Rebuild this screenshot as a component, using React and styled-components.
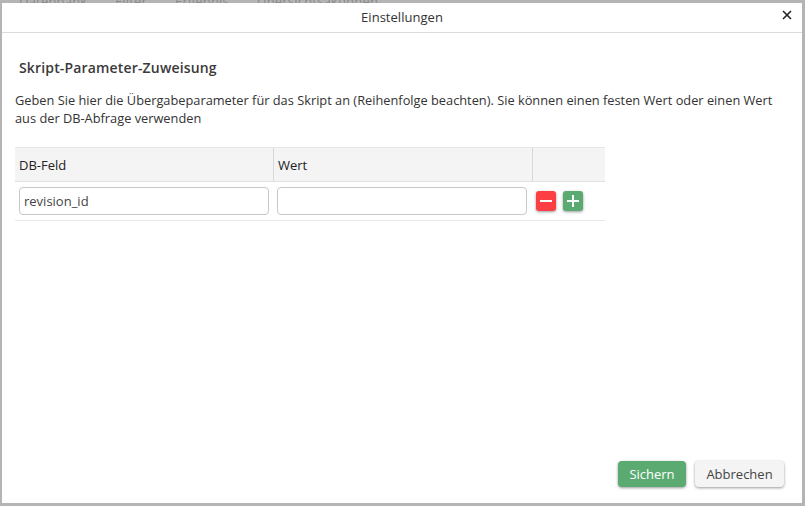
import React from "react";
import styled, { createGlobalStyle } from "styled-components";

const GlobalStyle = createGlobalStyle`
    html, body {
        margin: 0;
        padding: 0;
    }
    body {
        font-family: "Open Sans", "Liberation Sans", sans-serif;
        font-size: 13px;
        color: #333;
    }
`;

const Backdrop = styled.div`
    position: relative;
    width: 805px;
    height: 506px;
    box-sizing: border-box;
    padding: 3px 3px 3px 2px;
    background-color: #b4b4b4;
    overflow: hidden;
`;

const BehindTabs = styled.div`
    position: absolute;
    top: -7px;
    left: 19px;
    display: flex;
    gap: 28px;
    color: #8a8a8a;
    font-size: 13px;
    letter-spacing: 0.2px;
    line-height: 16px;
`;

const Dialog = styled.div`
    position: relative;
    display: flex;
    flex-direction: column;
    height: 100%;
    background-color: #fff;
`;

const Header = styled.div`
    display: flex;
    align-items: center;
    justify-content: center;
    height: 29px;
    border-bottom: 1px solid #dcdcdc;
    font-size: 13px;
    letter-spacing: 0.03px;
    padding-bottom: 1px;
    box-sizing: content-box;
    margin-top: -1px;
    position: relative;
`;

const CloseButton = styled.button`
    position: absolute;
    right: 9px;
    top: 7px;
    width: 12px;
    height: 12px;
    padding: 0;
    border: none;
    background: none;
    display: flex;
`;

const Body = styled.div`
    flex: 1;
    padding: 0 13px;
`;

const Heading = styled.h3`
    margin: 25px 0 0 4px;
    font-size: 14px;
    line-height: 19px;
    font-weight: 600;
    letter-spacing: 0.16px;
    color: #3a3a3a;
`;

const Intro = styled.p`
    margin: 14px 0 0;
    font-size: 12.8px;
    line-height: 18px;
    width: 770px;
`;

const Table = styled.div`
    width: 590px;
    margin-top: 20px;
`;

const Row = styled.div`
    display: grid;
    grid-template-columns: 258px 259px 73px;
    border-bottom: 1px solid #e8e8e8;
`;

const HeadRow = styled(Row)`
    grid-template-columns: 259px 259px 72px;
    background-color: #f4f4f4;
    border-top: 1px solid #e6e6e6;
    border-bottom: 1px solid #e2e2e2;
`;

const HeadCell = styled.div`
    height: 33px;
    box-sizing: border-box;
    padding: 0 4px;
    display: flex;
    align-items: center;
    font-weight: 500;
    color: #222;
    border-right: 1px solid ${(p) => (p.$last ? "transparent" : "#d8d8d8")};
`;

const Cell = styled.div`
    height: 38px;
    box-sizing: border-box;
    padding: 5px 4px 0;
`;

const ActionCell = styled(Cell)`
    display: flex;
    gap: 7px;
    padding: 9px 0 0 4px;
`;

const Input = styled.input`
    display: block;
    width: 250px;
    height: 28px;
    box-sizing: border-box;
    padding: 0 4px;
    border: 1px solid #c8c8c8;
    border-radius: 4px;
    font-family: inherit;
    font-size: 13px;
    color: #444;
    outline: none;
`;

const IconButton = styled.button`
    width: 20px;
    height: 20px;
    padding: 0;
    border: none;
    border-radius: 3px;
    background-color: ${(p) => p.$color};
    box-shadow: 0 1px 3px rgba(0, 0, 0, 0.4);
    display: flex;
    align-items: center;
    justify-content: center;
`;

const Footer = styled.div`
    display: flex;
    justify-content: flex-end;
    gap: 9px;
    padding: 0 18px 16px 0;
`;

const Button = styled.button`
    height: 26px;
    width: ${(p) => p.$width}px;
    padding: 0;
    border: none;
    border-radius: 4px;
    font-family: inherit;
    font-size: 13px;
    color: ${(p) => (p.$primary ? "#fff" : "#444")};
    background-color: ${(p) => (p.$primary ? "#5aaa72" : "#f4f4f4")};
    box-shadow: 0 1px 3px rgba(0, 0, 0, 0.4);
`;

const Glyph = ({ plus }) => (
    <svg width="12" height="12" viewBox="0 0 12 12">
        <path d={plus ? "M0 6H12M6 0V12" : "M0 6H12"} stroke="#fff" strokeWidth="2" />
    </svg>
);

const App = () => {
    return (
        <>
            <GlobalStyle />
            <Backdrop>
                <BehindTabs>
                    <span>Datenbank</span>
                    <span>Filter</span>
                    <span>Ergebnis</span>
                    <span>Übersichtsaktionen</span>
                </BehindTabs>
                <Dialog>
                    <Header>
                        Einstellungen
                        <CloseButton aria-label="Schließen">
                            <svg width="12" height="12" viewBox="0 0 12 12">
                                <path d="M2 2L10 10M10 2L2 10" stroke="#222" strokeWidth="1.6" />
                            </svg>
                        </CloseButton>
                    </Header>
                    <Body>
                        <Heading>Skript-Parameter-Zuweisung</Heading>
                        <Intro>
                            Geben Sie hier die Übergabeparameter für das Skript an (Reihenfolge beachten). Sie können
                            einen festen Wert oder einen Wert aus der DB-Abfrage verwenden
                        </Intro>
                        <Table>
                            <HeadRow>
                                <HeadCell>DB-Feld</HeadCell>
                                <HeadCell>Wert</HeadCell>
                                <HeadCell $last />
                            </HeadRow>
                            <Row>
                                <Cell>
                                    <Input defaultValue="revision_id" />
                                </Cell>
                                <Cell>
                                    <Input />
                                </Cell>
                                <ActionCell>
                                    <IconButton $color="#fb3f43">
                                        <Glyph />
                                    </IconButton>
                                    <IconButton $color="#5aaa72">
                                        <Glyph plus />
                                    </IconButton>
                                </ActionCell>
                            </Row>
                        </Table>
                    </Body>
                    <Footer>
                        <Button $primary $width={68}>Sichern</Button>
                        <Button $width={89}>Abbrechen</Button>
                    </Footer>
                </Dialog>
            </Backdrop>
        </>
    );
};

export default App;
